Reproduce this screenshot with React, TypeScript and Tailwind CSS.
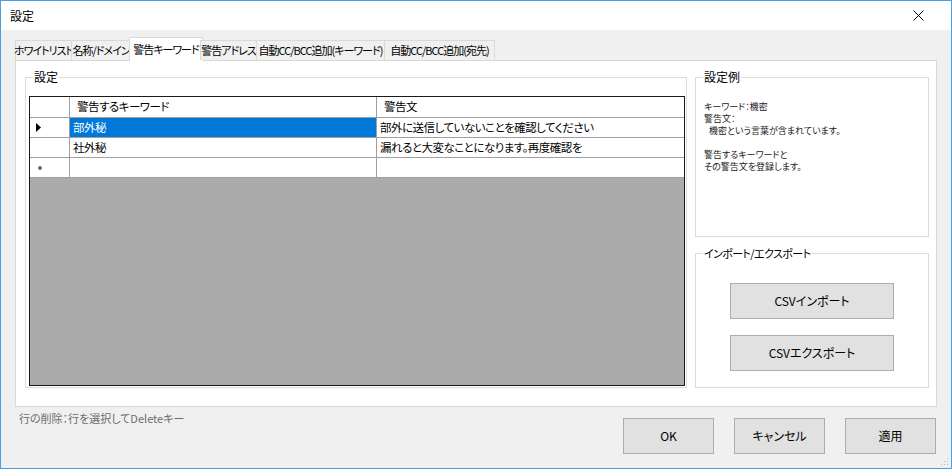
import React from 'react';

// 設定ダイアログ（警告キーワードタブ）
const TABS = [
  { label: 'ホワイトリスト', w: 'w-[57px]' },
  { label: '名称/ドメイン', w: 'w-[60px]' },
  { label: '警告キーワード', w: 'w-[68px]' },
  { label: '警告アドレス', w: 'w-[57px]' },
  { label: '自動CC/BCC追加(キーワード)', w: 'w-[129px]' },
  { label: '自動CC/BCC追加(宛先)', w: 'w-[111px]' },
];

const ROWS = [
  { keyword: '部外秘', message: '部外に送信していないことを確認してください', selected: true },
  { keyword: '社外秘', message: '漏れると大変なことになります。再度確認を', selected: false },
];

function WinButton({ label, className }: { label: string; className: string }) {
  return (
    <button className={`bg-[#e1e1e1] border border-[#adadad] text-[12px] text-black flex items-center justify-center ${className}`}>
      {label}
    </button>
  );
}

function Grid() {
  return (
    <div className="ml-[3px] w-[656px] h-[290px] border border-[#1a1a1a] bg-[#ababab] flex flex-col text-[11.5px] tracking-[-0.5px]">
      {/* header */}
      <div className="flex h-[21px] bg-white border-b border-[#a0a0a0]">
        <div className="w-[40px] border-r border-[#a0a0a0]" />
        <div className="w-[307px] border-r border-[#a0a0a0] pl-[7px] flex items-center">警告するキーワード</div>
        <div className="flex-1 pl-[7px] flex items-center">警告文</div>
      </div>
      {ROWS.map((r) => (
        <div key={r.keyword} className="flex h-[20px] bg-white border-b border-[#a0a0a0]">
          <div className="w-[40px] border-r border-[#a0a0a0] flex items-center pl-[6px]">
            {r.selected && (
              <svg width="5" height="9" viewBox="0 0 5 9">
                <path d="M0 0 L5 4.5 L0 9 Z" fill="#000" />
              </svg>
            )}
          </div>
          <div
            className={`w-[307px] border-r border-[#a0a0a0] pl-[3px] flex items-center ${
              r.selected ? 'bg-[#0078d7] text-white' : ''
            }`}
          >
            {r.keyword}
          </div>
          <div className="flex-1 pl-[3px] flex items-center">{r.message}</div>
        </div>
      ))}
      <div className="flex h-[20px] bg-white border-b border-[#a0a0a0]">
        <div className="w-[40px] border-r border-[#a0a0a0] flex items-center pl-[8px]">
          <span className="w-[4px] h-[4px] rounded-full bg-[#6a6a6a]" />
        </div>
        <div className="w-[307px] border-r border-[#a0a0a0]" />
        <div className="flex-1" />
      </div>
    </div>
  );
}

export default function App() {
  return (
    <div className="w-[952px] h-[469px] bg-[#f0f0f0] border border-[#4a9ee2] flex flex-col text-[12px] text-black font-['Noto_Sans_CJK_JP',sans-serif] [font-feature-settings:'palt'] leading-none overflow-hidden">
      {/* title bar */}
      <div className="h-[29px] bg-white flex items-center justify-between pl-[9px] pr-[27px] shrink-0">
        <span className="text-[12px]">設定</span>
        <svg width="11" height="11" viewBox="0 0 11 11">
          <path d="M0.5 0.5 L10.5 10.5 M10.5 0.5 L0.5 10.5" stroke="#000" strokeWidth="1" />
        </svg>
      </div>

      <div className="flex-1 flex flex-col px-[14px] pt-[8px]">
        {/* tabs */}
        <div className="flex items-end h-[22px] relative z-10 text-[11px] tracking-[-1px]">
          {TABS.map((t, i) =>
            i === 2 ? (
              <div
                key={t.label}
                className={`${t.w} h-[23px] -mb-px -mx-[2px] px-[2px] box-content bg-white border border-b-0 border-[#d9d9d9] flex items-center justify-center whitespace-nowrap`}
              >
                {t.label}
              </div>
            ) : (
              <div
                key={t.label}
                className={`${t.w} h-[20px] bg-[#f0f0f0] border border-b-0 border-[#d9d9d9] -ml-px first:ml-0 flex items-center justify-center whitespace-nowrap`}
              >
                {t.label}
              </div>
            )
          )}
        </div>

        {/* tab panel */}
        <div className="h-[347px] bg-white border border-[#d9d9d9] flex gap-[7px] pl-[9px] pr-[7px] pt-[8px] pb-[18px]">
          <fieldset className="w-[662px] border border-[#dcdcdc] pb-px pt-[11px]">
            <legend className="ml-[7px] px-px leading-[16px]">設定</legend>
            <Grid />
          </fieldset>

          <div className="flex-1 flex flex-col gap-[8px] pl-[1px]">
            <fieldset className="h-[168px] border border-[#dcdcdc] pt-[16px]">
              <legend className="ml-[7px] px-px leading-[16px]">設定例</legend>
              <div className="pl-[8px] text-[9px] leading-[12px] text-[#1a1a1a]">
                <div>キーワード：機密</div>
                <div>警告文：</div>
                <div className="pl-[5px]">機密という言葉が含まれています。</div>
                <div className="h-[12px]" />
                <div>警告するキーワードと</div>
                <div>その警告文を登録します。</div>
              </div>
            </fieldset>
            <fieldset className="flex-1 border border-[#dcdcdc] flex flex-col items-center pt-[22px] gap-[16px]">
              <legend className="ml-[7px] px-px leading-[16px] text-[11px] tracking-[-0.6px]">インポート/エクスポート</legend>
              <WinButton label="CSVインポート" className="w-[164px] h-[36px]" />
              <WinButton label="CSVエクスポート" className="w-[164px] h-[36px]" />
            </fieldset>
          </div>
        </div>
      </div>

      {/* footer */}
      <div className="h-[61px] shrink-0 flex justify-between pl-[18px] pr-[15px] relative">
        <span className="pt-[6px] text-[11px] text-[#6d6d6d]">行の削除：行を選択してDeleteキー</span>
        <div className="flex gap-[20px] pt-[11px]">
          <WinButton label="OK" className="w-[91px] h-[36px]" />
          <WinButton label="キャンセル" className="w-[91px] h-[36px]" />
          <WinButton label="適用" className="w-[91px] h-[36px]" />
        </div>
        <svg className="absolute right-[2px] bottom-[2px]" width="9" height="9" viewBox="0 0 9 9">
          <rect x="7" y="1" width="1" height="1" fill="#b8b8b8" />
          <rect x="4" y="4" width="1" height="1" fill="#b8b8b8" />
          <rect x="7" y="4" width="1" height="1" fill="#b8b8b8" />
          <rect x="1" y="7" width="1" height="1" fill="#b8b8b8" />
          <rect x="4" y="7" width="1" height="1" fill="#b8b8b8" />
          <rect x="7" y="7" width="1" height="1" fill="#b8b8b8" />
        </svg>
      </div>
    </div>
  );
}
